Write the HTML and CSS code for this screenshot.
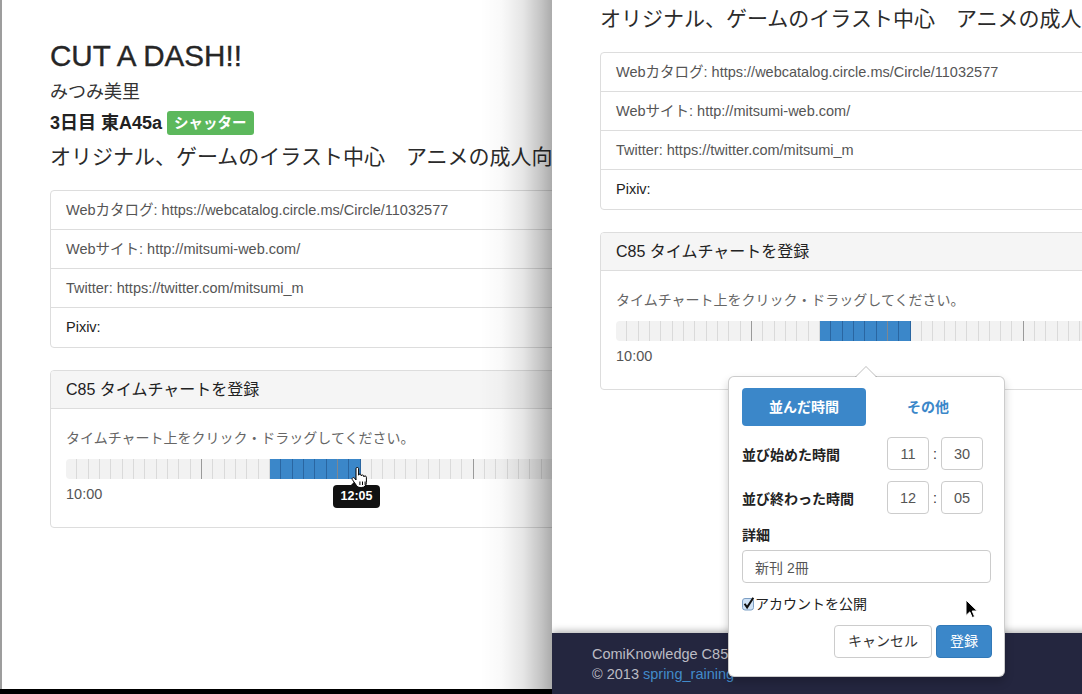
FILE: index.html
```html
<!DOCTYPE html>
<html lang="ja">
<head>
<meta charset="utf-8">
<title>CUT A DASH!! - ComiKnowledge C85</title>
<link rel="stylesheet" href="styles.css">
</head>
<body>
<div class="desktop">

  <section class="window window-back">
    <div class="page">
      <div class="main">
        <h1 class="title">CUT A DASH!!</h1>
        <div class="author">みつみ美里</div>
        <div class="loc"><span>3日目 東A45a</span><span class="badge">シャッター</span></div>
        <div class="desc">オリジナル、ゲームのイラスト中心　アニメの成人向け</div>
        <ul class="links">
          <li>Webカタログ: https://webcatalog.circle.ms/Circle/11032577</li>
          <li>Webサイト: http://mitsumi-web.com/</li>
          <li>Twitter: https://twitter.com/mitsumi_m</li>
          <li class="dark">Pixiv:</li>
        </ul>
        <div class="panel">
          <div class="panel-heading">C85 タイムチャートを登録</div>
          <div class="panel-body">
            <div class="hint">タイムチャート上をクリック・ドラッグしてください。</div>
            <div class="track">
              <div class="cells">
                <span class="cell"></span><span class="cell"></span><span class="cell"></span><span class="cell"></span><span class="cell"></span><span class="cell"></span><span class="cell"></span><span class="cell"></span><span class="cell"></span><span class="cell"></span><span class="cell"></span><span class="cell"></span>
                <span class="cell"></span><span class="cell"></span><span class="cell"></span><span class="cell"></span><span class="cell"></span><span class="cell"></span><span class="cell on"></span><span class="cell on"></span><span class="cell on"></span><span class="cell on"></span><span class="cell on"></span><span class="cell on"></span>
                <span class="cell on"></span><span class="cell on"></span><span class="cell"></span><span class="cell"></span><span class="cell"></span><span class="cell"></span><span class="cell"></span><span class="cell"></span><span class="cell"></span><span class="cell"></span><span class="cell"></span><span class="cell"></span>
                <span class="cell"></span><span class="cell"></span><span class="cell"></span><span class="cell"></span><span class="cell"></span><span class="cell"></span><span class="cell"></span><span class="cell"></span><span class="cell"></span><span class="cell"></span><span class="cell"></span><span class="cell"></span>
              </div>
              <div class="tip">12:05</div>
              <svg class="hand" width="17" height="22" viewBox="0 0 17 22">
                <path d="M5 1.6C5 .9 5.6.4 6.3.4S7.6.9 7.6 1.6V8.2C7.6 7.6 8.1 7.1 8.9 7.1S10.2 7.6 10.2 8.3V9C10.3 8.4 10.8 8 11.5 8S12.8 8.6 12.8 9.2V9.9C12.9 9.3 13.4 8.9 14.1 8.9S15.4 9.5 15.4 10.2V15.5C15.4 18.3 13.5 20.5 10.7 20.5H9.2C7.6 20.5 6.4 19.8 5.5 18.5L1.3 12.6C.9 12 1.1 11.2 1.7 10.8S3.1 10.6 3.5 11.1L5 13Z" fill="#fff" stroke="#000" stroke-width="1"/>
                <path d="M8.9 14.5V18M11.5 14.5V18M14.1 14.5V18" stroke="#000" stroke-width="1"/>
              </svg>
            </div>
            <div class="time-start">10:00</div>
          </div>
        </div>
      </div>
    </div>
    <div class="edge-shadow"></div>
  </section>

  <section class="window window-front">
    <div class="page scrolled">
      <div class="main">
        <h1 class="title">CUT A DASH!!</h1>
        <div class="author">みつみ美里</div>
        <div class="loc"><span>3日目 東A45a</span><span class="badge">シャッター</span></div>
        <div class="desc">オリジナル、ゲームのイラスト中心　アニメの成人向け</div>
        <ul class="links">
          <li>Webカタログ: https://webcatalog.circle.ms/Circle/11032577</li>
          <li>Webサイト: http://mitsumi-web.com/</li>
          <li>Twitter: https://twitter.com/mitsumi_m</li>
          <li class="dark">Pixiv:</li>
        </ul>
        <div class="panel">
          <div class="panel-heading">C85 タイムチャートを登録</div>
          <div class="panel-body">
            <div class="hint">タイムチャート上をクリック・ドラッグしてください。</div>
            <div class="track">
              <div class="cells">
                <span class="cell"></span><span class="cell"></span><span class="cell"></span><span class="cell"></span><span class="cell"></span><span class="cell"></span><span class="cell"></span><span class="cell"></span><span class="cell"></span><span class="cell"></span><span class="cell"></span><span class="cell"></span>
                <span class="cell"></span><span class="cell"></span><span class="cell"></span><span class="cell"></span><span class="cell"></span><span class="cell"></span><span class="cell on"></span><span class="cell on"></span><span class="cell on"></span><span class="cell on"></span><span class="cell on"></span><span class="cell on"></span>
                <span class="cell on"></span><span class="cell on"></span><span class="cell"></span><span class="cell"></span><span class="cell"></span><span class="cell"></span><span class="cell"></span><span class="cell"></span><span class="cell"></span><span class="cell"></span><span class="cell"></span><span class="cell"></span>
                <span class="cell"></span><span class="cell"></span><span class="cell"></span><span class="cell"></span><span class="cell"></span><span class="cell"></span><span class="cell"></span><span class="cell"></span><span class="cell"></span><span class="cell"></span><span class="cell"></span><span class="cell"></span>
              </div>
            </div>
            <div class="time-start">10:00</div>
          </div>
        </div>
      </div>
      <footer class="footer">
        <div>ComiKnowledge C85</div>
        <div>© 2013 <a href="#">spring_raining</a></div>
      </footer>
    </div>

    <div class="popover">
      <div class="tabs">
        <span class="tab active">並んだ時間</span>
        <span class="tab">その他</span>
      </div>
      <div class="time-row">
        <span class="time-label">並び始めた時間</span>
        <input class="time-box" type="text" value="11">
        <span class="colon">:</span>
        <input class="time-box" type="text" value="30">
      </div>
      <div class="time-row">
        <span class="time-label">並び終わった時間</span>
        <input class="time-box" type="text" value="12">
        <span class="colon">:</span>
        <input class="time-box" type="text" value="05">
      </div>
      <div class="field-label">詳細</div>
      <input class="text-input" type="text" value="新刊 2冊">
      <div class="check-row">
        <svg class="check" width="13" height="14" viewBox="0 0 13 14">
          <rect x="0.5" y="1.5" width="11" height="11.5" rx="2.5" fill="#cfe2f6" stroke="#7d9fc4"/>
          <path d="M2.6 6.8L5.1 10.4L11.3 0.8" fill="none" stroke="#111" stroke-width="2"/>
        </svg>
        <span>アカウントを公開</span>
      </div>
      <div class="actions">
        <span class="btn">キャンセル</span>
        <span class="btn btn-primary">登録</span>
      </div>
    </div>

    <svg class="arrow-cursor" width="14" height="21" viewBox="0 0 14 21">
      <path d="M1 1L1 16.5L4.8 12.9L7.3 18.6L9.6 17.6L7.2 12L12.3 12Z" fill="#000" stroke="#fff" stroke-width="1"/>
    </svg>
  </section>

</div>
</body>
</html>
```

FILE: styles.css
```css
* { box-sizing: border-box; }

html, body {
  margin: 0;
  padding: 0;
}

body {
  width: 1082px;
  height: 694px;
  overflow: hidden;
  background: #000;
  font-family: "Liberation Sans", "Noto Sans CJK JP", sans-serif;
  color: #333;
}

.desktop {
  position: relative;
  width: 1082px;
  height: 694px;
}

.window {
  position: absolute;
  top: 0;
  overflow: hidden;
  background: #fff;
}

.window-back {
  left: 0;
  width: 552px;
  height: 689px;
  border-left: 2px solid #9d9d9d;
}

.window-front {
  left: 552px;
  width: 530px;
  height: 694px;
}

.edge-shadow {
  position: absolute;
  top: 0;
  right: 0;
  bottom: 0;
  width: 72px;
  pointer-events: none;
  background: linear-gradient(to right,
    rgba(0,0,0,0) 0%,
    rgba(0,0,0,0.025) 30%,
    rgba(0,0,0,0.1) 60%,
    rgba(0,0,0,0.23) 85%,
    rgba(0,0,0,0.33) 100%);
}

.page {
  width: 1040px;
}

.page.scrolled {
  margin-top: -138px;
}

.main {
  padding: 40px 48px 0;
  min-height: 771px;
}

.title {
  margin: 0;
  font-size: 29.6px;
  line-height: 32px;
  font-weight: normal;
  color: #262626;
  -webkit-text-stroke: 0.35px #262626;
}

.author {
  margin-top: 7px;
  font-size: 18px;
  line-height: 26px;
}

.loc {
  margin-top: 5px;
  display: flex;
  align-items: center;
  gap: 5px;
  font-size: 18px;
  line-height: 26px;
  font-weight: bold;
  color: #222;
}

.badge {
  display: inline-block;
  height: 24px;
  padding: 0 7px;
  border-radius: 3px;
  background: #5cb85c;
  color: #fff;
  font-size: 14.5px;
  line-height: 24px;
  font-weight: bold;
}

.desc {
  margin-top: 6px;
  font-size: 21px;
  line-height: 30px;
  white-space: nowrap;
  color: #2b2b2b;
}

.links {
  list-style: none;
  margin: 18px 0 0;
  padding: 0;
  border: 1px solid #ddd;
  border-radius: 4px;
}

.links li {
  padding: 10px 15px;
  font-size: 14.5px;
  line-height: 18px;
  color: #555;
  border-top: 1px solid #ddd;
}

.links li:first-child {
  border-top: 0;
}

.links li.dark {
  color: #222;
  padding-bottom: 11px;
}

.panel {
  margin-top: 22px;
  border: 1px solid #ddd;
  border-radius: 4px;
}

.panel-heading {
  padding: 10px 15px;
  background: #f5f5f5;
  border-bottom: 1px solid #ddd;
  border-radius: 3px 3px 0 0;
  font-size: 16px;
  line-height: 17px;
  color: #222;
}

.panel-body {
  padding: 19px 15px 23px;
}

.hint {
  font-size: 14px;
  line-height: 20px;
  color: #666;
}

.track {
  position: relative;
  margin-top: 11px;
  height: 20px;
}

.cells {
  display: flex;
  height: 20px;
  overflow: hidden;
  border-radius: 4px 0 0 4px;
}

.cell {
  flex: 0 0 11.333px;
  height: 20px;
  background: #f2f2f2;
  border-right: 1px solid #dadada;
}

.cell:nth-child(12n) {
  border-right-color: #9a9a9a;
}

.cell.on {
  background: #3b87c9;
  border-right-color: #2a66a1;
}

.cell.on:nth-child(12n) {
  border-right-color: #7f8790;
}

.time-start {
  margin-top: 5px;
  font-size: 14.5px;
  line-height: 20px;
  color: #555;
}

.tip {
  position: absolute;
  left: 267px;
  top: 26px;
  width: 47px;
  height: 23px;
  border-radius: 4px;
  background: #111;
  color: #fff;
  font-size: 12.5px;
  line-height: 23px;
  font-weight: bold;
  text-align: center;
}

.tip::before {
  content: "";
  position: absolute;
  top: -5px;
  left: 18px;
  border-style: solid;
  border-width: 0 5px 5px;
  border-color: transparent transparent #111;
}

.hand {
  position: absolute;
  left: 285px;
  top: 8px;
}

.footer {
  padding: 11px 40px 30px;
  background: #24263f;
  box-shadow: 0 -2px 7px rgba(0,0,0,0.3);
  font-size: 14.5px;
  line-height: 20px;
  color: #bcbcc4;
}

.footer a {
  color: #428bca;
  text-decoration: none;
}

/* popover */
.popover {
  position: absolute;
  left: 176px;
  top: 376px;
  width: 277px;
  padding: 11px 13px 18px;
  background: #fff;
  border: 1px solid rgba(0,0,0,0.2);
  border-radius: 6px;
  box-shadow: 0 5px 10px rgba(0,0,0,0.2);
  color: #222;
}

.popover::before,
.popover::after {
  content: "";
  position: absolute;
  border-style: solid;
}

.popover::before {
  top: -11px;
  left: 126px;
  border-width: 0 11px 11px;
  border-color: transparent transparent rgba(0,0,0,0.25);
}

.popover::after {
  top: -10px;
  left: 127px;
  border-width: 0 10px 10px;
  border-color: transparent transparent #fff;
}

.tabs {
  display: grid;
  grid-template-columns: 124px 124px;
}

.tab {
  height: 38px;
  border-radius: 4px;
  font-size: 14px;
  line-height: 38px;
  font-weight: bold;
  text-align: center;
  color: #3b87c9;
}

.tab.active {
  background: #3b87c9;
  color: #fff;
}

.time-row {
  display: flex;
  align-items: center;
  margin-top: 11px;
}

.time-label {
  width: 145px;
  font-size: 14px;
  font-weight: bold;
}

.time-box {
  width: 42px;
  height: 33px;
  margin: 0;
  padding: 0;
  border: 1px solid #ccc;
  border-radius: 4px;
  font-family: inherit;
  font-size: 14.5px;
  color: #555;
  text-align: center;
  background: #fff;
}

.colon {
  width: 12px;
  text-align: center;
  font-size: 14px;
  color: #333;
}

.field-label {
  margin-top: 11px;
  font-size: 14px;
  line-height: 20px;
  font-weight: bold;
}

.text-input {
  display: block;
  width: 249px;
  height: 33px;
  margin: 5px 0 0;
  padding: 0 12px;
  border: 1px solid #ccc;
  border-radius: 4px;
  font-family: inherit;
  font-size: 14px;
  color: #555;
  background: #fff;
}

.check-row {
  display: flex;
  align-items: center;
  margin-top: 11px;
  font-size: 14px;
  line-height: 20px;
  color: #222;
}

.check {
  flex: none;
}

.actions {
  display: flex;
  justify-content: flex-end;
  gap: 4px;
  margin-top: 11px;
  margin-right: -1px;
}

.btn {
  height: 33px;
  padding: 0 13px;
  border: 1px solid #ccc;
  border-radius: 4px;
  font-size: 14px;
  line-height: 31px;
  color: #333;
  background: #fff;
}

.btn-primary {
  background: #3b87c9;
  border-color: #3279b8;
  color: #fff;
}

.arrow-cursor {
  position: absolute;
  left: 413px;
  top: 599px;
}
```
